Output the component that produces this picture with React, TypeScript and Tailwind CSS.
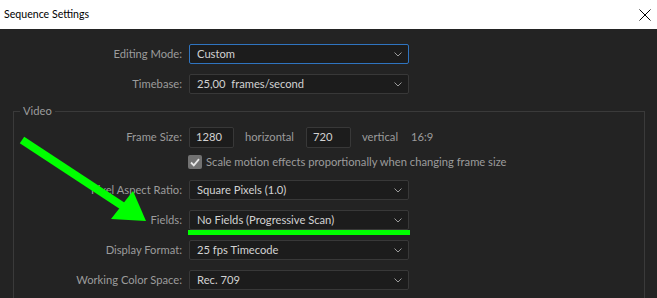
import React from "react";

const font = { fontFamily: "Lato, 'Noto Sans', sans-serif" };

function Chevron() {
  return (
    <svg width="8" height="5" viewBox="0 0 8 5" className="shrink-0">
      <path d="M0.5 0.5 L4 4 L7.5 0.5" fill="none" stroke="#9a9a9a" strokeWidth="1" />
    </svg>
  );
}

function Dropdown({ value, active }: { value: string; active?: boolean }) {
  return (
    <div
      className={`flex items-center justify-between w-[220px] h-[20px] rounded-[2px] border pl-[7px] pr-[6px] bg-[#1c1c1c] ${
        active ? "border-[#2f74c0]" : "border-[#383838]"
      }`}
    >
      <span className="text-[11.2px] text-[#d2d2d2] leading-none whitespace-pre">{value}</span>
      <Chevron />
    </div>
  );
}

function Row({ label, labelW, children }: { label: string; labelW: number; children: React.ReactNode }) {
  return (
    <div className="flex items-center h-[20px]">
      <div
        className="text-right text-[11.2px] text-[#9c9c9c] pr-[7px] shrink-0 leading-none whitespace-nowrap"
        style={{ width: labelW }}
      >
        {label}
      </div>
      {children}
    </div>
  );
}

export default function App() {
  return (
    <div className="w-[657px] h-[298px] overflow-hidden bg-[#232323] relative" style={font}>
      <div className="h-[29px] bg-white flex items-center justify-between pl-[4px] pr-[6px]">
        <span className="text-[10.6px] text-black">Sequence Settings</span>
        <svg width="12" height="12" viewBox="0 0 12 12">
          <path d="M0.5 0.5 L11.5 11.5 M11.5 0.5 L0.5 11.5" stroke="#000" strokeWidth="1" />
        </svg>
      </div>

      <div className="pt-[15px] flex flex-col gap-[10px]">
        <Row label="Editing Mode:" labelW={189}>
          <Dropdown value="Custom" active />
        </Row>
        <Row label="Timebase:" labelW={189}>
          <Dropdown value="25,00  frames/second" />
        </Row>
      </div>

      <div className="mt-[17px] ml-[13px] mr-[12px] border-l border-t border-r border-[#3a3a3a] relative h-[200px]">
        <span className="absolute -top-[7px] left-[6px] px-[3px] bg-[#232323] text-[11.2px] text-[#9c9c9c] leading-none">
          Video
        </span>
        <div className="pt-[15px] flex flex-col">
          <Row label="Frame Size:" labelW={175}>
            <div className="w-[45px] h-[21px] rounded-[2px] border border-[#383838] bg-[#1c1c1c] flex items-center pl-[6px] text-[11.2px] text-[#d2d2d2]">
              1280
            </div>
            <span className="ml-[11px] w-[61px] text-[11.2px] text-[#9c9c9c]">horizontal</span>
            <div className="w-[45px] h-[21px] rounded-[2px] border border-[#383838] bg-[#1c1c1c] flex items-center pl-[6px] text-[11.2px] text-[#d2d2d2]">
              720
            </div>
            <span className="ml-[11px] w-[49px] text-[11.2px] text-[#9c9c9c]">vertical</span>
            <span className="text-[11.2px] text-[#9c9c9c]">16:9</span>
          </Row>
          <div className="flex items-center h-[14px] mt-[8px] pl-[174px]">
            <div className="w-[14px] h-[14px] rounded-[2px] bg-[#727272] flex items-center justify-center">
              <svg width="10" height="9" viewBox="0 0 10 9">
                <path d="M1 4.5 L3.8 7.3 L9 1.2" fill="none" stroke="#e6e6e6" strokeWidth="1.8" />
              </svg>
            </div>
            <span className="ml-[4px] text-[11.2px] text-[#9c9c9c] leading-none">
              Scale motion effects proportionally when changing frame size
            </span>
          </div>
          <div className="mt-[11px] flex flex-col gap-[10px]">
            <Row label="Pixel Aspect Ratio:" labelW={175}>
              <Dropdown value="Square Pixels (1.0)" />
            </Row>
            <Row label="Fields:" labelW={175}>
              <Dropdown value="No Fields (Progressive Scan)" />
            </Row>
            <Row label="Display Format:" labelW={175}>
              <Dropdown value="25 fps Timecode" />
            </Row>
            <Row label="Working Color Space:" labelW={175}>
              <Dropdown value="Rec. 709" />
            </Row>
          </div>
        </div>
      </div>

      {/* annotation overlay */}
      <div className="absolute left-[188px] top-[230px] w-[222px] h-[5px] bg-[#00ff00]" />
      <svg className="absolute left-0 top-0 pointer-events-none" width="657" height="298">
        <line x1="22" y1="140" x2="124" y2="207" stroke="#00ff00" strokeWidth="8" />
        <polygon points="111,219 146,221 133,191" fill="#00ff00" />
      </svg>
    </div>
  );
}
